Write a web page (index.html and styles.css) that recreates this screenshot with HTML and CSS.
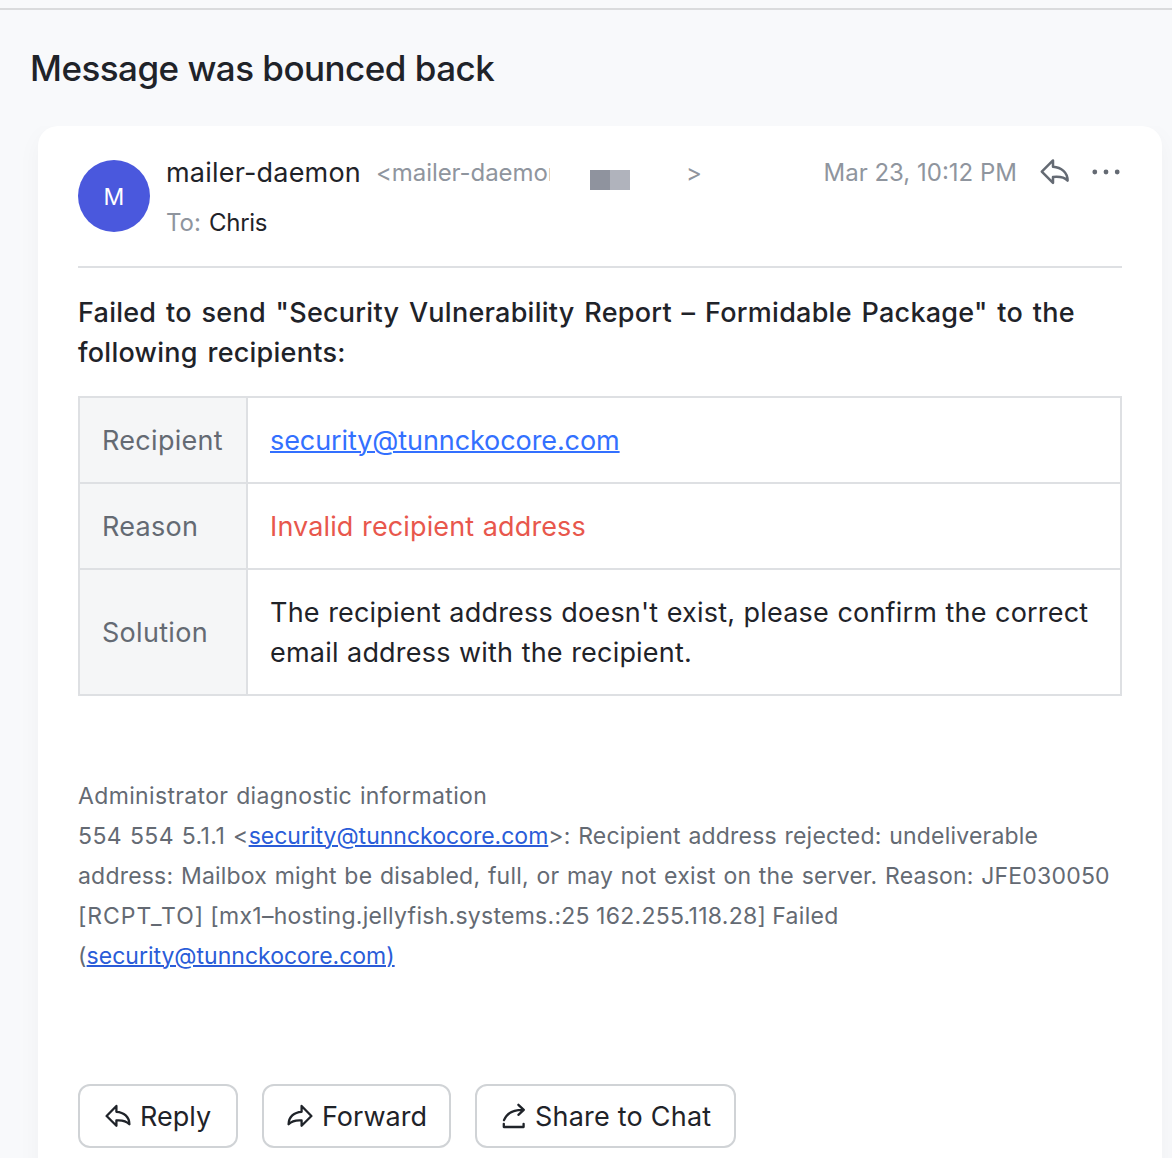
FILE: index.html
```html
<!DOCTYPE html>
<html lang="en">
<head>
<meta charset="utf-8">
<title>Message was bounced back</title>
<link rel="stylesheet" href="styles.css">
</head>
<body>
<main class="page">
  <h1 class="title"><span>Message was bounced back</span></h1>
  <div class="card-area">
    <article class="card">
      <header class="header">
        <div class="avatar">M</div>
        <div class="people">
          <div class="from"><span class="name">mailer-daemon</span><span class="address"><span class="clip">&lt;mailer-daemon</span><span class="mosaic"><i></i><i></i></span><span class="gt">&gt;</span></span></div>
          <div class="to"><span class="to-label">To:</span><span class="to-name">Chris</span></div>
        </div>
        <div class="meta">
          <time>Mar 23, 10:12 PM</time>
          <svg class="meta-reply" viewBox="0 0 30 28" width="30" height="28" fill="none" stroke="currentColor" stroke-width="2.5" stroke-linejoin="round"><path d="M13 2.4 1.8 13.6 13 24.8V19C19 18.4 24 18.8 27.6 22.6 27.6 14.5 21.5 9.4 13 8.8Z"/></svg>
          <svg class="more" viewBox="0 0 28 6" width="28" height="6" fill="currentColor"><circle cx="2.8" cy="3" r="2.4"/><circle cx="14" cy="3" r="2.4"/><circle cx="25.2" cy="3" r="2.4"/></svg>
        </div>
      </header>
      <h2 class="summary"><span class="line">Failed to send "Security Vulnerability Report – Formidable Package" to the</span><span class="line">following recipients:</span></h2>
      <table class="details">
        <tr><th><span>Recipient</span></th><td><a href="#">security@tunnckocore.com</a></td></tr>
        <tr><th><span>Reason</span></th><td class="error"><span>Invalid recipient address</span></td></tr>
        <tr><th><span>Solution</span></th><td><span class="line">The recipient address doesn't exist, please confirm the correct</span><span class="line">email address with the recipient.</span></td></tr>
      </table>
      <section class="diagnostic">
        <span class="line diag-title">Administrator diagnostic information</span>
        <span class="line"><span class="code">554 554 5.1.1 &lt;</span><a href="#">security@tunnckocore.com</a>&gt;: Recipient address rejected: undeliverable</span>
        <span class="line">address: Mailbox might be disabled, full, or may not exist on the server. Reason: JFE030050</span>
        <span class="line host"><span class="command">[RCPT_TO]</span> [mx1–hosting.jellyfish.systems.:25 162.255.118.28] Failed</span>
        <span class="line">(<a href="#">security@tunnckocore.com)</a></span>
      </section>
      <footer class="actions">
        <button class="reply"><svg viewBox="0 0 26 24" width="26" height="24" fill="none" stroke="currentColor" stroke-width="2.3" stroke-linejoin="round"><path d="M11.4 2 1.6 12 11.4 21.8V16.4C17 16 21.2 16.8 24.4 20.2 24.3 13 19 8.2 11.4 7.8Z"/></svg><span>Reply</span></button>
        <button class="forward"><svg viewBox="0 0 26 24" width="26" height="24" fill="none" stroke="currentColor" stroke-width="2.3" stroke-linejoin="round"><path d="M14.6 2 24.4 12 14.6 21.8V16.4C9 16 4.8 16.8 1.6 20.2 1.7 13 7 8.2 14.6 7.8Z"/></svg><span>Forward</span></button>
        <button class="share"><svg viewBox="0 0 24 26" width="24" height="26" fill="none" stroke="currentColor" stroke-width="2.3" stroke-linecap="round" stroke-linejoin="round"><path d="M2 17.2C4.5 10.8 10 6.6 21.5 6.8M16.4 1.8 21.8 6.8 16.4 11.8M1.8 20.8V24H21.6V20.8"/></svg><span>Share to Chat</span></button>
      </footer>
    </article>
  </div>
</main>
</body>
</html>
```
FILE: styles.css
```css
* { box-sizing: border-box; }
body {
  margin: 0;
  background: #f8f9fb;
  color: #1f2329;
  font-family: Inter, "Liberation Sans", sans-serif;
}
.page { height: 1158px; overflow: hidden; padding-top: 8px; }
.title {
  margin: 0;
  height: 118px;
  padding: 35px 30px 0;
  border-top: 2px solid #dadbdd;
  font-size: 35px;
  line-height: 46px;
  font-weight: 500;
  letter-spacing: -0.53px;
}
.card-area { height: 1032px; overflow: hidden; padding: 0 10px 0 38px; }
.card {
  height: 1100px;
  padding: 34px 40px 0;
  border-radius: 20px;
  background: #fff;
  box-shadow: 0 8px 24px rgba(31, 35, 41, 0.04);
}
.header {
  display: flex;
  align-items: flex-start;
  height: 108px;
  border-bottom: 2px solid #dee0e3;
}
.avatar {
  width: 72px;
  height: 72px;
  border-radius: 50%;
  background: #4a58dd;
  color: #fff;
  font-size: 23px;
  line-height: 74px;
  text-align: center;
}
.people { margin-left: 16px; }
.from { display: flex; height: 26px; line-height: 26px; font-size: 27px; }
.name { width: 210px; letter-spacing: 0.2px; }
.address { display: flex; color: #8f959e; font-size: 24px; }
.clip { width: 174px; overflow: hidden; white-space: nowrap; letter-spacing: -0.07px; }
.mosaic { display: flex; margin: 10px 56px 0 40px; height: 20px; }
.mosaic i { width: 20px; background: #8f939e; }
.mosaic i + i { background: #b0b3bc; }
.to { display: flex; gap: 8px; margin-top: 23px; font-size: 24px; line-height: 28px; }
.to-label { color: #8f959e; }
.to-name { letter-spacing: -0.25px; }
.meta { display: flex; margin: 0 2px 0 auto; color: #646a73; }
.meta time { color: #8f959e; font-size: 24px; line-height: 26px; }
.meta-reply { margin: -2px 22px 0 23px; }
.more { margin-top: 9px; }
.line { display: block; white-space: nowrap; }
.summary {
  margin: 25px 0 23px;
  font-size: 27px;
  line-height: 40px;
  font-weight: 500;
  letter-spacing: 0.25px;
  word-spacing: 2.3px;
}
.details {
  width: 1044px;
  height: 300px;
  table-layout: fixed;
  border-collapse: collapse;
  font-size: 27px;
  line-height: 40px;
}
.details th, .details td { height: 86px; padding: 2px 22px 0; border: 2px solid #dee0e3; text-align: left; font-weight: 400; }
.details tr:last-child th { height: 126px; }
.details th { width: 168px; background: #f5f6f7; color: #646a73; letter-spacing: 0.3px; }
.details td { letter-spacing: 0.2px; word-spacing: 0.6px; }
.details a { color: #3370ff; letter-spacing: -0.09px; }
a { text-decoration-thickness: 2px; }
.details .error { color: #e8574c; letter-spacing: 0.13px; word-spacing: 0.8px; }
.diagnostic {
  margin-top: 80px;
  height: 308px;
  color: #646a73;
  font-size: 23px;
  line-height: 40px;
  letter-spacing: 0.2px;
  word-spacing: 1px;
}
.diagnostic a { color: #2a5cd8; letter-spacing: 0; }
.diag-title { letter-spacing: 0.35px; }
.code { letter-spacing: 0.4px; }
.host { letter-spacing: 0.27px; word-spacing: -0.5px; }
.command { letter-spacing: 0.95px; }
.actions { display: flex; gap: 24px; }
.actions button {
  display: flex;
  align-items: center;
  height: 64px;
  padding: 0 0 0 25px;
  border: 2px solid #d0d3d6;
  border-radius: 12px;
  background: #fff;
  color: #1f2329;
  font: 400 27px/60px Inter, sans-serif;
}
.actions span { padding-top: 2px; }
.reply { width: 160px; }
.actions .forward { width: 189px; padding-left: 23px; }
.share { width: 261px; }
.share span { letter-spacing: 0.22px; }
.actions svg { margin-right: 9px; }
```
